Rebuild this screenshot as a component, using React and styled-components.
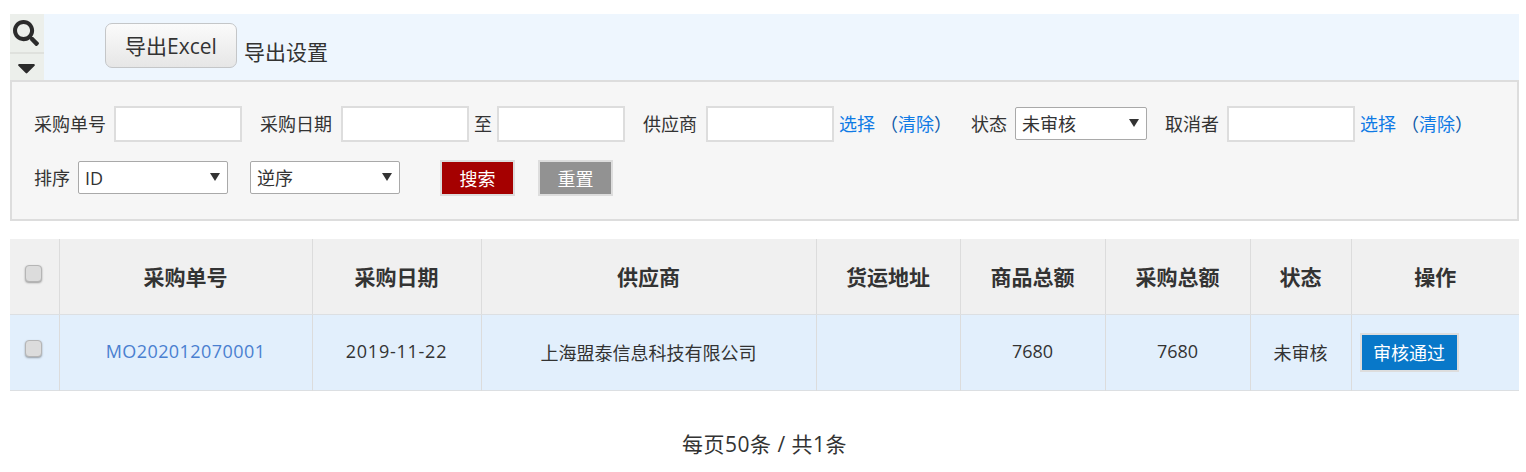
import React from "react";
import styled, { createGlobalStyle } from "styled-components";
import { FaSearch, FaCaretDown } from "react-icons/fa";

const Global = createGlobalStyle`
  html, body { margin: 0; padding: 0; background: #fff; }
  body { font-family: "Open Sans", "Noto Sans CJK SC", sans-serif; color: #333; font-size: 18px; }
`;
const FONT = `"Open Sans", "Noto Sans CJK SC", sans-serif`;

const Page = styled.div`
  width: 1509px;
  padding: 14px 7px 0 10px;
`;
const Toolbar = styled.div`
  display: flex;
  height: 66px;
  background: #eef6fe;
`;
const IconColumn = styled.div`
  width: 34px;
  background: #ecefeb;
  display: flex;
  flex-direction: column;
  color: #2b2b2b;
`;
const IconCell = styled.div`
  height: ${p => p.$h}px;
  display: flex;
  align-items: center;
  justify-content: center;
  box-sizing: border-box;
  padding-right: 2px;
  border-bottom: ${p => (p.$line ? "2px solid #dfe1dd" : "none")};
`;
const ExportButton = styled.button`
  margin: 9px 8px 0 61px;
  width: 132px;
  height: 45px;
  box-sizing: border-box;
  border: 1px solid #c4c6c8;
  border-radius: 7px;
  background: linear-gradient(#fbfbfb, #e6e6e6);
  font: 21px ${FONT};
  color: #333;
  padding: 0 0 1px;
`;
const ToolbarText = styled.span`
  font-size: 21px;
  line-height: 29px;
  margin: 24px 0 0 -1px;
`;
const Filter = styled.div`
  height: 141px;
  box-sizing: border-box;
  border: 2px solid #ddd;
  background: #f6f6f6;
  padding: 24px 0 0 22px;
`;
const Row = styled.div`
  display: flex;
  align-items: center;
  height: ${p => p.$h}px;
  margin-bottom: ${p => p.$mb || 0}px;
`;
const Label = styled.span`
  margin-left: ${p => p.$ml || 0}px;
  margin-right: ${p => p.$mr ?? 8}px;
  line-height: 24px;
  white-space: nowrap;
`;
const TextInput = styled.input`
  width: 128px;
  height: 36px;
  box-sizing: border-box;
  border: 2px solid #ddd;
  background: #fff;
  outline: none;
`;
const Link = styled.a`
  color: #0f7ae5;
  text-decoration: none;
`;
const LinkGroup = styled.span`
  margin-left: 5px;
  white-space: nowrap;
  line-height: 24px;
`;
const Clear = styled.span`
  margin-left: 5px;
  color: #0f5aa8;
`;
const SelectWrap = styled.span`
  position: relative;
  display: block;
  width: ${p => p.$w}px;
  height: 33px;
  margin-left: ${p => p.$ml || 0}px;
  margin-bottom: 1px;
  &::after {
    content: "";
    position: absolute;
    right: 8px;
    top: 12px;
    border-left: 5px solid transparent;
    border-right: 5px solid transparent;
    border-top: 8px solid #333;
  }
`;
const Select = styled.select`
  appearance: none;
  width: 100%;
  height: 100%;
  box-sizing: border-box;
  border: 1px solid #a9a9a9;
  border-radius: 2px;
  background: #fff;
  font: 18px ${FONT};
  color: #333;
  padding: 0 0 0 6px;
  outline: none;
`;
const ActionButton = styled.button`
  margin-left: ${p => p.$ml || 0}px;
  width: ${p => p.$w || 75}px;
  height: ${p => p.$hh || 36}px;
  box-sizing: border-box;
  border: 2px solid #ddd;
  background: ${p => p.$bg};
  color: #fff;
  font: ${p => p.$fs || 18}px ${FONT};
  padding: 0;
`;
const Table = styled.table`
  margin-top: 18px;
  width: 1509px;
  table-layout: fixed;
  border-collapse: collapse;
  border-bottom: 1px solid #dcdfe2;
`;
const HeadRow = styled.tr`
  height: 75px;
  background: #f0f0f0;
`;
const BodyRow = styled.tr`
  height: 76px;
  background: #e2effc;
`;
const Th = styled.th`
  font-size: 21px;
  font-weight: 700;
  color: #333;
  padding: 0;
  border-left: 1px solid #dcdcdc;
  border-bottom: 1px solid #dcdfe2;
  &:first-child { border-left: none; }
`;
const Td = styled.td`
  text-align: ${p => (p.$left ? "left" : "center")};
  padding: ${p => (p.$left ? "0 0 0 8px" : p.$latin ? "0 0 3px" : "0 0 1px")};
  border-left: 1px solid #dcdcdc;
  color: #333;
  &:first-child { border-left: none; }
`;
const Spaced = styled.span`
  letter-spacing: ${p => p.$ls}px;
`;
const Check = styled.input.attrs({ type: "checkbox" })`
  appearance: none;
  display: block;
  width: 17px;
  height: 17px;
  margin: -6px 0 0 15px;
  border: 1px solid #b5b5b5;
  border-radius: 4px;
  background: #dcdcdc;
  box-shadow: 0 1px 2px rgba(0,0,0,.35);
`;
const OrderLink = styled.a`
  color: #4a7fd0;
  letter-spacing: .43px;
`;
const Pager = styled.div`
  margin-top: 39px;
  text-align: center;
  font-size: 21px;
  letter-spacing: .5px;
  line-height: 28px;
`;

const columns = [
  ["", 49], ["采购单号", 253], ["采购日期", 169], ["供应商", 335], ["货运地址", 144],
  ["商品总额", 145], ["采购总额", 145], ["状态", 101], ["操作", 168],
];

function LinkPair() {
  return (
    <LinkGroup>
      <Link>选择</Link>
      <Clear>（<Link>清除</Link>）</Clear>
    </LinkGroup>
  );
}

export default function App() {
  return (
    <Page>
      <Global />
      <Toolbar>
        <IconColumn>
          <IconCell $h={40} $line><FaSearch size={26} /></IconCell>
          <IconCell $h={26}><FaCaretDown size={29} /></IconCell>
        </IconColumn>
        <ExportButton>导出Excel</ExportButton>
        <ToolbarText>导出设置</ToolbarText>
      </Toolbar>
      <Filter>
        <Row $h={36} $mb={18}>
          <Label>采购单号</Label>
          <TextInput />
          <Label $ml={18} $mr={9}>采购日期</Label>
          <TextInput />
          <Label $ml={5} $mr={5}>至</Label>
          <TextInput />
          <Label $ml={18} $mr={9}>供应商</Label>
          <TextInput />
          <LinkPair />
          <Label $ml={19}>状态</Label>
          <SelectWrap $w={132}><Select defaultValue="未审核"><option>未审核</option></Select></SelectWrap>
          <Label $ml={18}>取消者</Label>
          <TextInput />
          <LinkPair />
        </Row>
        <Row $h={36}>
          <Label>排序</Label>
          <SelectWrap $w={150}><Select defaultValue="ID"><option>ID</option></Select></SelectWrap>
          <SelectWrap $w={150} $ml={22}><Select defaultValue="逆序"><option>逆序</option></Select></SelectWrap>
          <ActionButton $ml={40} $bg="#a50000">搜索</ActionButton>
          <ActionButton $ml={23} $bg="#929292">重置</ActionButton>
        </Row>
      </Filter>
      <Table>
        <colgroup>
          {columns.map(([, w], i) => <col key={i} style={{ width: w }} />)}
        </colgroup>
        <thead>
          <HeadRow>
            {columns.map(([t], i) => <Th key={i}>{i === 0 ? <Check /> : t}</Th>)}
          </HeadRow>
        </thead>
        <tbody>
          <BodyRow>
            <Td><Check /></Td>
            <Td $latin><OrderLink>MO202012070001</OrderLink></Td>
            <Td $latin><Spaced $ls={0.75}>2019-11-22</Spaced></Td>
            <Td>上海盟泰信息科技有限公司</Td>
            <Td></Td>
            <Td $latin>7680</Td>
            <Td $latin>7680</Td>
            <Td>未审核</Td>
            <Td $left><ActionButton $w={99} $hh={39} $bg="#0878c9" $fs={18}>审核通过</ActionButton></Td>
          </BodyRow>
        </tbody>
      </Table>
      <Pager>每页50条 / 共1条</Pager>
    </Page>
  );
}
